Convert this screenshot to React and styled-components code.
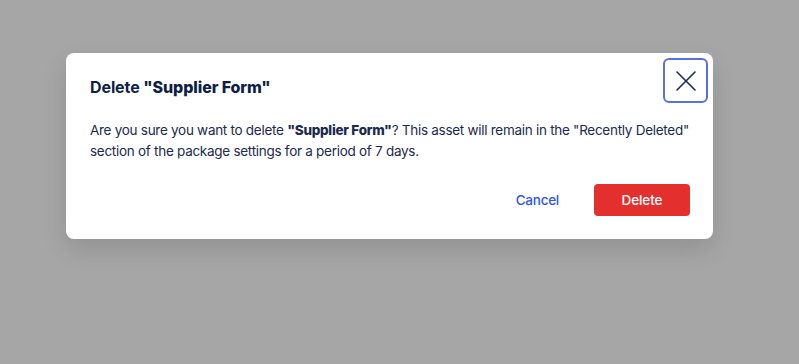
import React from "react";
import styled, { createGlobalStyle } from "styled-components";

const Global = createGlobalStyle`
  html, body { margin: 0; padding: 0; }
  body {
    background: #a6a6a6;
    font-family: Inter, "Noto Sans", sans-serif;
    width: 799px;
    height: 364px;
    overflow: hidden;
  }
`;

const Backdrop = styled.div`
  width: 799px;
  height: 364px;
  padding-top: 53px;
  padding-left: 66px;
  box-sizing: border-box;
`;

const Modal = styled.div`
  position: relative;
  width: 647px;
  height: 186px;
  box-sizing: border-box;
  background: #ffffff;
  border-radius: 8px;
  box-shadow: 0 10px 24px rgba(0, 0, 0, 0.12);
  padding: 23px 23px 0 24px;
  display: flex;
  flex-direction: column;
`;

const Title = styled.h2`
  margin: 0;
  font-size: 16px;
  line-height: 22px;
  font-weight: 700;
  color: #0e1f47;
  letter-spacing: -0.1px;
`;

const Strong = styled.strong`
  font-weight: 800;
`;

const Body = styled.p`
  margin: 22px 0 0;
  font-size: 13.5px;
  letter-spacing: -0.28px;
  line-height: 21px;
  font-weight: 400;
  color: #1b2a4e;
  white-space: nowrap;
`;

const CloseButton = styled.button`
  position: absolute;
  top: 5px;
  right: 5px;
  width: 45px;
  height: 45px;
  box-sizing: border-box;
  border: 2px solid #5b70e0;
  border-radius: 6px;
  background: #fff;
  display: flex;
  align-items: center;
  justify-content: center;
  padding: 0;
  cursor: pointer;
`;

const Actions = styled.div`
  display: flex;
  justify-content: flex-end;
  align-items: center;
  gap: 35px;
  margin-top: 22px;
`;

const TextButton = styled.button`
  border: none;
  background: none;
  padding: 0;
  font-family: inherit;
  font-size: 13.5px;
  letter-spacing: -0.25px;
  font-weight: 500;
  color: #2f54ea;
  cursor: pointer;
`;

const DangerButton = styled.button`
  width: 96px;
  height: 32px;
  border: none;
  border-radius: 4px;
  background: #e3302f;
  color: #fff;
  font-family: inherit;
  font-size: 13.5px;
  letter-spacing: -0.1px;
  font-weight: 500;
  cursor: pointer;
`;

export default function App() {
  return (
    <>
      <Global />
      <Backdrop>
        <Modal>
          <CloseButton aria-label="Close">
            <svg width="22" height="22" viewBox="0 0 22 22" fill="none">
              <path d="M2 2L20 20M20 2L2 20" stroke="#1b2a4e" strokeWidth="1.6" strokeLinecap="round" />
            </svg>
          </CloseButton>
          <Title>
            Delete <Strong>"Supplier Form"</Strong>
          </Title>
          <Body>
            Are you sure you want to delete <Strong>"Supplier Form"</Strong>? This asset will remain in the "Recently Deleted"
            <br />
            section of the package settings for a period of 7 days.
          </Body>
          <Actions>
            <TextButton>Cancel</TextButton>
            <DangerButton>Delete</DangerButton>
          </Actions>
        </Modal>
      </Backdrop>
    </>
  );
}
